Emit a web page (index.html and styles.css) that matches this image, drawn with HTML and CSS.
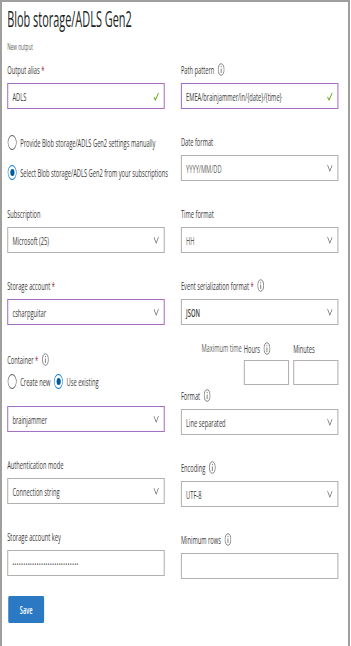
FILE: index.html
```html
<!DOCTYPE html>
<html lang="en">
<head>
    <meta charset="UTF-8">
    <meta name="viewport" content="width=device-width, initial-scale=1.0">
    <title>Blob storage/ADLS Gen2</title>
    <link rel="stylesheet" href="styles.css">
</head>
<body>
    <div class="frame">
        <div class="blade">
            <h1 class="blade-title">Blob storage/ADLS Gen2</h1>
            <div class="blade-sub">New output</div>

            <div class="form-grid">
                <!-- left column -->
                <div class="col">
                    <div class="field">
                        <div class="lbl">Output alias<span class="req">*</span></div>
                        <div class="box dirty">
                            <span class="val">ADLS</span>
                            <svg class="check" viewBox="0 0 11 9"><polyline points="1,5 4,8 10,1"/></svg>
                        </div>
                    </div>

                    <div class="radio-group">
                        <div class="radio-row"><span class="radio"></span>Provide Blob storage/ADLS Gen2 settings manually</div>
                        <div class="radio-row"><span class="radio on"></span>Select Blob storage/ADLS Gen2 from your subscriptions</div>
                    </div>

                    <div class="field">
                        <div class="lbl">Subscription</div>
                        <div class="box">
                            <span class="val">Microsoft (25)</span>
                            <svg class="chev" viewBox="0 0 11 8"><polyline points="1,1 5.5,7 10,1"/></svg>
                        </div>
                    </div>

                    <div class="field">
                        <div class="lbl">Storage account<span class="req">*</span></div>
                        <div class="box dirty">
                            <span class="val">csharpguitar</span>
                            <svg class="chev" viewBox="0 0 11 8"><polyline points="1,1 5.5,7 10,1"/></svg>
                        </div>
                    </div>

                    <div class="field container-field">
                        <div class="lbl">Container<span class="req">*</span>
                            <svg class="info" viewBox="0 0 13 13"><circle cx="6.5" cy="6.5" r="5.8"/><line x1="6.5" y1="5.5" x2="6.5" y2="10"/><circle class="dot" cx="6.5" cy="3.6" r="0.8"/></svg>
                        </div>
                        <div class="radio-inline">
                            <span class="opt"><span class="radio"></span>Create new</span>
                            <span class="opt"><span class="radio on"></span>Use existing</span>
                        </div>
                        <div class="box dirty">
                            <span class="val">brainjammer</span>
                            <svg class="chev" viewBox="0 0 11 8"><polyline points="1,1 5.5,7 10,1"/></svg>
                        </div>
                    </div>

                    <div class="field">
                        <div class="lbl">Authentication mode</div>
                        <div class="box">
                            <span class="val">Connection string</span>
                            <svg class="chev" viewBox="0 0 11 8"><polyline points="1,1 5.5,7 10,1"/></svg>
                        </div>
                    </div>

                    <div class="field">
                        <div class="lbl">Storage account key</div>
                        <div class="box">
                            <span class="val secret">••••••••••••••••••••••••••••••</span>
                        </div>
                    </div>

                    <button class="save-btn">Save</button>
                </div>

                <!-- right column -->
                <div class="col">
                    <div class="field">
                        <div class="lbl">Path pattern
                            <svg class="info" viewBox="0 0 13 13"><circle cx="6.5" cy="6.5" r="5.8"/><line x1="6.5" y1="5.5" x2="6.5" y2="10"/><circle class="dot" cx="6.5" cy="3.6" r="0.8"/></svg>
                        </div>
                        <div class="box dirty">
                            <span class="val">EMEA/brainjammer/in/{date}/{time}</span>
                            <svg class="check" viewBox="0 0 11 9"><polyline points="1,5 4,8 10,1"/></svg>
                        </div>
                    </div>

                    <div class="field">
                        <div class="lbl">Date format</div>
                        <div class="box">
                            <span class="val light">YYYY/MM/DD</span>
                            <svg class="chev" viewBox="0 0 11 8"><polyline points="1,1 5.5,7 10,1"/></svg>
                        </div>
                    </div>

                    <div class="field">
                        <div class="lbl">Time format</div>
                        <div class="box">
                            <span class="val light">HH</span>
                            <svg class="chev" viewBox="0 0 11 8"><polyline points="1,1 5.5,7 10,1"/></svg>
                        </div>
                    </div>

                    <div class="field">
                        <div class="lbl">Event serialization format<span class="req">*</span>
                            <svg class="info" viewBox="0 0 13 13"><circle cx="6.5" cy="6.5" r="5.8"/><line x1="6.5" y1="5.5" x2="6.5" y2="10"/><circle class="dot" cx="6.5" cy="3.6" r="0.8"/></svg>
                        </div>
                        <div class="box">
                            <span class="val strong">JSON</span>
                            <svg class="chev" viewBox="0 0 11 8"><polyline points="1,1 5.5,7 10,1"/></svg>
                        </div>
                    </div>

                    <div class="maxtime">
                        <span class="maxtime-lbl">Maximum time</span>
                        <div class="mt-col">
                            <div class="lbl">Hours
                                <svg class="info" viewBox="0 0 13 13"><circle cx="6.5" cy="6.5" r="5.8"/><line x1="6.5" y1="5.5" x2="6.5" y2="10"/><circle class="dot" cx="6.5" cy="3.6" r="0.8"/></svg>
                            </div>
                            <div class="box mt-box"></div>
                        </div>
                        <div class="mt-col">
                            <div class="lbl">Minutes</div>
                            <div class="box mt-box"></div>
                        </div>
                    </div>

                    <div class="field format-field">
                        <div class="lbl">Format
                            <svg class="info" viewBox="0 0 13 13"><circle cx="6.5" cy="6.5" r="5.8"/><line x1="6.5" y1="5.5" x2="6.5" y2="10"/><circle class="dot" cx="6.5" cy="3.6" r="0.8"/></svg>
                        </div>
                        <div class="box">
                            <span class="val">Line separated</span>
                            <svg class="chev" viewBox="0 0 11 8"><polyline points="1,1 5.5,7 10,1"/></svg>
                        </div>
                    </div>

                    <div class="field">
                        <div class="lbl">Encoding
                            <svg class="info" viewBox="0 0 13 13"><circle cx="6.5" cy="6.5" r="5.8"/><line x1="6.5" y1="5.5" x2="6.5" y2="10"/><circle class="dot" cx="6.5" cy="3.6" r="0.8"/></svg>
                        </div>
                        <div class="box">
                            <span class="val">UTF-8</span>
                            <svg class="chev" viewBox="0 0 11 8"><polyline points="1,1 5.5,7 10,1"/></svg>
                        </div>
                    </div>

                    <div class="field">
                        <div class="lbl">Minimum rows
                            <svg class="info" viewBox="0 0 13 13"><circle cx="6.5" cy="6.5" r="5.8"/><line x1="6.5" y1="5.5" x2="6.5" y2="10"/><circle class="dot" cx="6.5" cy="3.6" r="0.8"/></svg>
                        </div>
                        <div class="box"></div>
                    </div>
                </div>
            </div>
        </div>
    </div>
</body>
</html>
```

FILE: styles.css
```css
body {
    margin: 0;
    padding: 0;
    font-family: "Open Sans", "Liberation Sans", sans-serif;
    color: #3b3a39;
    background: #fff;
}

/* grey window edge round the blade */
.frame {
    width: 350px;
    min-height: 646px;
    box-sizing: border-box;
    border: 2px solid #a19f9d;
    border-bottom: none;
    overflow: hidden;
}

/* the screenshot is squeezed sideways, so the blade is too */
.blade {
    width: 665px;
    box-sizing: border-box;
    padding: 5px 0 0 10px;
    transform: scaleX(0.52);
    transform-origin: left top;
}

.blade-title {
    margin: 0;
    font-size: 21px;
    font-weight: 400;
    line-height: 24px;
    color: #201f1e;
}

.blade-sub {
    margin-top: 10px;
    font-size: 9px;
    line-height: 12px;
    color: #605e5c;
}

.form-grid {
    display: flex;
    gap: 31px;
    margin-top: 8px;
}

.col {
    flex: none;
    width: 303px;
}

.field {
    margin-top: 24px;
}

.field:first-child {
    margin-top: 0;
}

.lbl {
    display: flex;
    align-items: center;
    height: 16px;
    margin-bottom: 6px;
    font-size: 11px;
    white-space: nowrap;
}

.req {
    color: #a4262c;
    margin-left: 3px;
}

.info {
    width: 13px;
    height: 13px;
    margin-left: 7px;
    fill: none;
    stroke: #605e5c;
    stroke-width: 1;
}

.info .dot {
    fill: #605e5c;
    stroke: none;
}

.box {
    height: 26px;
    box-sizing: border-box;
    border-style: solid;
    border-color: #b3b0ad;
    border-width: 1px 2px;
    display: flex;
    align-items: center;
    justify-content: space-between;
    padding: 0 9px 0 8px;
    font-size: 11px;
    background: #fff;
}

.box.dirty {
    border-color: #a66fc6;
}

.val {
    color: #3b3a39;
    white-space: nowrap;
}

.val.light {
    color: #605e5c;
}

.val.strong {
    font-weight: 600;
}

.val.secret {
    font-size: 8px;
    letter-spacing: 1.25px;
}

.chev {
    width: 11px;
    height: 8px;
    fill: none;
    stroke: #605e5c;
    stroke-width: 1.1;
}

.check {
    width: 11px;
    height: 9px;
    fill: none;
    stroke: #57a300;
    stroke-width: 1.3;
}

/* radio buttons */
.radio-group {
    margin-top: 23px;
    display: flex;
    flex-direction: column;
    gap: 10px;
}

.radio-row,
.opt {
    display: flex;
    align-items: center;
    height: 20px;
    font-size: 11px;
    white-space: nowrap;
}

.radio {
    flex: none;
    width: 17px;
    height: 15px;
    box-sizing: border-box;
    border: 1.4px solid #605e5c;
    border-radius: 50%;
    margin: 0 7px 0 1px;
    display: flex;
    align-items: center;
    justify-content: center;
}

.radio.on {
    border-color: #0078d4;
}

.radio.on::after {
    content: "";
    width: 8px;
    height: 7px;
    border-radius: 50%;
    background: #005a9e;
}

.radio-group + .field {
    margin-top: 23px;
}

.container-field {
    margin-top: 26px;
}

.radio-inline {
    display: flex;
    gap: 6px;
    margin-top: -2px;
    margin-bottom: 15px;
}

.save-btn {
    display: block;
    margin: 20px 0 0 2px;
    width: 69px;
    height: 27px;
    border: none;
    border-radius: 2px;
    background: #2b79c2;
    color: #fff;
    font-family: inherit;
    font-size: 11px;
    font-weight: 600;
    cursor: pointer;
}

/* maximum time row */
.maxtime {
    display: flex;
    justify-content: flex-end;
    gap: 8px;
    margin-top: 15px;
}

.maxtime-lbl {
    height: 16px;
    line-height: 16px;
    font-size: 11px;
    color: #605e5c;
    margin-right: -4px;
}

.mt-col {
    width: 87px;
}

.mt-col .lbl {
    margin-bottom: 4px;
}

.mt-box {
    height: 25px;
}

.format-field {
    margin-top: 2px;
}
```
